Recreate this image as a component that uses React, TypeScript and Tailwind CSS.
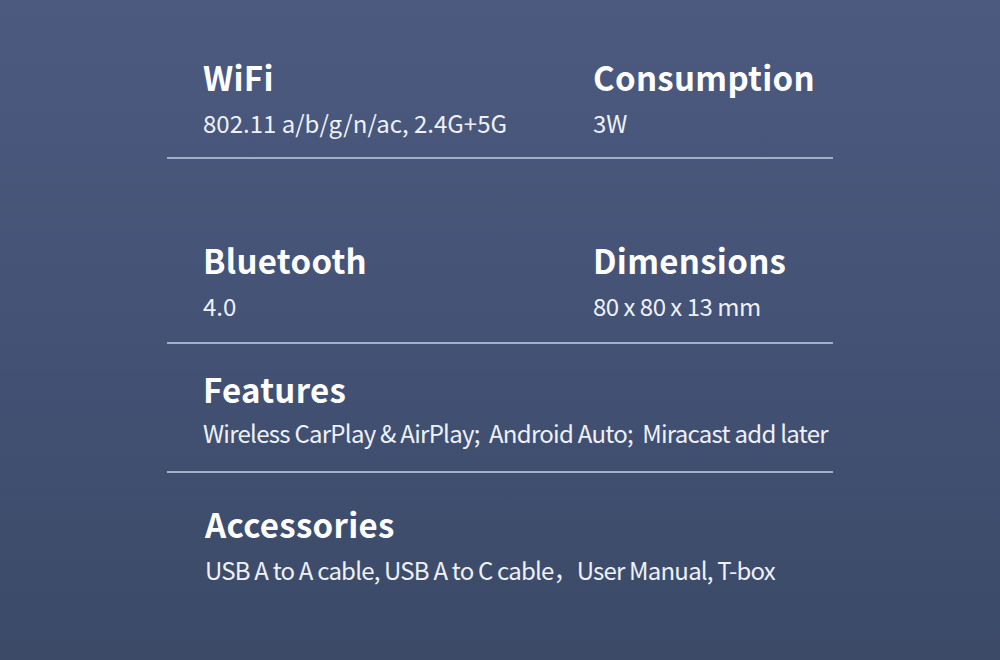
import React from 'react';

interface SpecProps {
    title: string;
    value: string;
    className?: string;
    valueClass?: string;
}

const Spec: React.FC<SpecProps> = ({ title, value, className, valueClass }) => {
    return (
        <div className={className}>
            <h2 className="text-[33px] leading-[40px] font-bold text-white tracking-[0.3px]">{title}</h2>
            <p className={`text-[24px] leading-[30px] font-normal text-[#eef1f7] whitespace-pre ${valueClass ?? 'mt-[11px]'}`}>{value}</p>
        </div>
    );
};

const Divider = () => <div className="h-[2px] w-full bg-[#a3afc6]" />;

export default function App() {
    return (
        <div
            className="w-[1000px] h-[660px] overflow-hidden bg-gradient-to-b from-[#4b5a7e] via-[#435275] to-[#3c4a68]"
            style={{ fontFamily: '"Noto Sans CJK SC", "Noto Sans", sans-serif' }}
        >
            <div className="mx-auto w-[666px] pt-[57px]">
                {/* WiFi / Consumption */}
                <div className="grid grid-cols-[426px_1fr]">
                    <Spec className="pl-[36px]" title="WiFi" value="802.11 a/b/g/n/ac, 2.4G+5G" />
                    <Spec title="Consumption" value="3W" />
                </div>
                <div className="mt-[19px]">
                    <Divider />
                </div>

                {/* Bluetooth / Dimensions */}
                <div className="grid grid-cols-[426px_1fr] mt-[81px]">
                    <Spec className="pl-[36px]" title="Bluetooth" value="4.0" />
                    <Spec title="Dimensions" value="80 x 80 x 13 mm" valueClass="mt-[11px] tracking-[-0.5px]" />
                </div>
                <div className="mt-[21px]">
                    <Divider />
                </div>

                {/* Features */}
                <Spec className="pl-[36px] mt-[25px]" title="Features" value="Wireless CarPlay & AirPlay;  Android Auto;  Miracast add later" valueClass="mt-[9px] tracking-[-0.73px]" />
                <div className="mt-[23px]">
                    <Divider />
                </div>

                {/* Accessories */}
                <Spec className="pl-[38px] mt-[31px]" title="Accessories" value="USB A to A cable, USB A to C cable，User Manual, T-box" valueClass="mt-[11px] tracking-[-0.8px]" />
            </div>
        </div>
    );
}
